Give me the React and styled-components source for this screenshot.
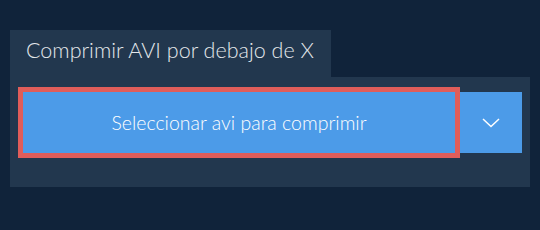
import styled, { createGlobalStyle } from "styled-components";

const GlobalStyle = createGlobalStyle`
  html, body {
    margin: 0;
    padding: 0;
    background: #10233a;
    font-family: Lato, "Noto Sans", sans-serif;
  }
`;

const Page = styled.div`
  width: 540px;
  height: 230px;
  padding: 30px 10px 0 10px;
  box-sizing: border-box;
`;

const Tab = styled.div`
  display: inline-block;
  background: #22374e;
  color: #e4e8ec;
  font-size: 21.5px;
  font-weight: 300;
  height: 47px;
  line-height: 40px;
  padding: 0 15px 0 16px;
  box-sizing: border-box;
  width: 321px;
  white-space: nowrap;
`;

const Panel = styled.div`
  background: #22374e;
  height: 110px;
  padding: 15px 8px 0 13px;
  box-sizing: border-box;
  display: flex;
  gap: 5px;
  align-items: flex-start;
`;

const MainButton = styled.button`
  flex: 0 0 432px;
  height: 61px;
  background: #4c9be8;
  color: #ffffff;
  border: none;
  outline: 5px solid #e05d5a;
  font-family: Lato, "Noto Sans", sans-serif;
  font-size: 19.5px;
  font-weight: 300;
  padding: 0;
  cursor: pointer;
`;

const DropButton = styled.button`
  flex: 0 0 62px;
  height: 61px;
  background: #4c9be8;
  border: none;
  display: flex;
  align-items: center;
  justify-content: center;
  padding: 0;
  cursor: pointer;
`;

export default function App() {
  return (
    <>
      <GlobalStyle />
      <Page>
        <Tab>Comprimir AVI por debajo de X</Tab>
        <Panel>
          <MainButton>Seleccionar avi para comprimir</MainButton>
          <DropButton>
            <svg width="18" height="10" viewBox="0 0 18 10">
              <path d="M1 1 L9 8.5 L17 1" fill="none" stroke="#fff" strokeWidth="1.5" />
            </svg>
          </DropButton>
        </Panel>
      </Page>
    </>
  );
}
